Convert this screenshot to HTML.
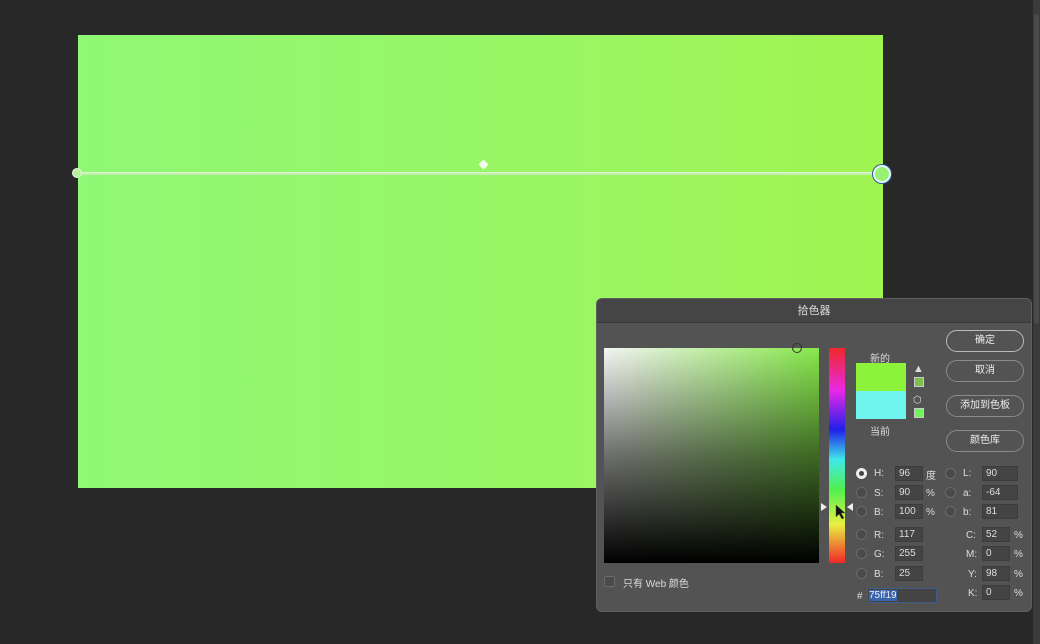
<!DOCTYPE html>
<html><head><meta charset="utf-8"><style>
*{margin:0;padding:0;box-sizing:border-box}
body{width:1040px;height:644px;background:#282828;position:relative;overflow:hidden;font-family:"Liberation Sans","Noto Sans CJK SC",sans-serif;color:#ddd;font-size:10px}
.a{position:absolute}
.rad{position:absolute;width:11px;height:11px;border-radius:50%;border:1px solid #6a6a6a;background:#4a4a4a}
.lab{position:absolute;font-size:10px;color:#ddd}
.fld{position:absolute;height:15px;background:#444;border:1px solid #3c3c3c;color:#ddd;font-size:10px;padding-left:3px;line-height:13px}
.btn{position:absolute;left:946px;width:78px;height:22px;border:1px solid #8a8a8a;border-radius:11px;text-align:center;line-height:20px;font-size:10px;color:#eee}
</style></head><body>
<div class="a" style="left:1033px;top:0;width:7px;height:644px;background:#3a3a3a"></div>
<div class="a" style="left:1034px;top:14px;width:5px;height:310px;background:#4a4a4a;border-radius:3px"></div>
<div class="a" style="left:78px;top:35px;width:805px;height:453px;background:linear-gradient(90deg,#8ff874,#99f663 60%,#a0f450)"></div>
<div class="a" style="left:78px;top:172px;width:804px;height:3px;background:#c6eeb3;border-top:1px solid #d8f5cb"></div>
<div class="a" style="left:72px;top:168px;width:10px;height:10px;border-radius:50%;background:#b8f0a0;border:1px solid #e8f8e0"></div>
<div class="a" style="left:480px;top:161px;width:7px;height:7px;background:#f2fbee;transform:rotate(45deg)"></div>
<div class="a" style="left:873px;top:165px;width:18px;height:18px;border-radius:50%;background:#96f270;border:2px solid #e8f4ff;box-shadow:0 0 0 1px #2a5a90"></div>

<div class="a" style="left:596px;top:298px;width:436px;height:314px;background:#535353;border-radius:6px;overflow:hidden;border:1px solid #5e5e5e">
 <div style="height:24px;background:#454545;border-bottom:1px solid #3a3a3a;text-align:center;line-height:24px;font-size:11px;color:#ddd">拾色器</div>
</div>
<div class="a" style="left:604px;top:348px;width:215px;height:215px;background:linear-gradient(to bottom,rgba(0,0,0,0),rgba(0,0,0,.55) 50%,#000),linear-gradient(to right,#f4f4f4,#86e84a)"></div>
<div class="a" style="left:792px;top:343px;width:10px;height:10px;border-radius:50%;border:1px solid #333"></div>
<div class="a" style="left:829px;top:348px;width:16px;height:215px;background:linear-gradient(to bottom,#f02828,#e828e8 20%,#2020e8 38%,#40e8e8 52%,#50f050 66%,#e8f040 82%,#f02828)"></div>
<div class="a" style="left:821px;top:503px;width:0;height:0;border-left:6px solid #eee;border-top:4px solid transparent;border-bottom:4px solid transparent"></div>
<div class="a" style="left:847px;top:503px;width:0;height:0;border-right:6px solid #eee;border-top:4px solid transparent;border-bottom:4px solid transparent"></div>
<svg class="a" style="left:834px;top:504px" width="12" height="16" viewBox="0 0 12 16"><path d="M2 1 L2 13 L5 10 L8 15 L10 14 L7 9 L11 9 Z" fill="#111" stroke="#555" stroke-width=".5"/></svg>
<div class="lab" style="left:870px;top:350px">新的</div>
<div class="a" style="left:856px;top:363px;width:50px;height:28px;background:#8cf23a"></div>
<div class="a" style="left:856px;top:391px;width:50px;height:28px;background:#70f4ee"></div>
<div class="lab" style="left:870px;top:423px">当前</div>
<div class="lab" style="left:913px;top:363px;font-size:11px">▲</div>
<div class="a" style="left:914px;top:377px;width:10px;height:10px;background:#7cc24a;border:1px solid #ccc"></div>
<div class="lab" style="left:913px;top:395px">⬡</div>
<div class="a" style="left:914px;top:408px;width:10px;height:10px;background:#74f060;border:1px solid #ccc"></div>
<div class="btn" style="top:330px;border-color:#bbb">确定</div>
<div class="btn" style="top:360px">取消</div>
<div class="btn" style="top:395px">添加到色板</div>
<div class="btn" style="top:430px">颜色库</div>

<div class="rad" style="left:856px;top:468px;background:#eee;border:3px solid #eee"></div>
<div class="a" style="left:859px;top:471px;width:5px;height:5px;border-radius:50%;background:#444"></div>
<div class="lab" style="left:874px;top:468px">H:</div><div class="fld" style="left:895px;top:466px;width:28px">96</div><div class="lab" style="left:926px;top:467px">度</div>
<div class="rad" style="left:856px;top:487px"></div><div class="lab" style="left:874px;top:488px">S:</div><div class="fld" style="left:895px;top:485px;width:28px">90</div><div class="lab" style="left:926px;top:488px">%</div>
<div class="rad" style="left:856px;top:506px"></div><div class="lab" style="left:874px;top:507px">B:</div><div class="fld" style="left:895px;top:504px;width:28px">100</div><div class="lab" style="left:926px;top:507px">%</div>
<div class="rad" style="left:856px;top:529px"></div><div class="lab" style="left:874px;top:530px">R:</div><div class="fld" style="left:895px;top:527px;width:28px">117</div>
<div class="rad" style="left:856px;top:548px"></div><div class="lab" style="left:874px;top:549px">G:</div><div class="fld" style="left:895px;top:546px;width:28px">255</div>
<div class="rad" style="left:856px;top:568px"></div><div class="lab" style="left:874px;top:569px">B:</div><div class="fld" style="left:895px;top:566px;width:28px">25</div>
<div class="rad" style="left:945px;top:468px"></div><div class="lab" style="left:963px;top:468px">L:</div><div class="fld" style="left:982px;top:466px;width:36px">90</div>
<div class="rad" style="left:945px;top:487px"></div><div class="lab" style="left:963px;top:488px">a:</div><div class="fld" style="left:982px;top:485px;width:36px">-64</div>
<div class="rad" style="left:945px;top:506px"></div><div class="lab" style="left:963px;top:507px">b:</div><div class="fld" style="left:982px;top:504px;width:36px">81</div>
<div class="lab" style="left:966px;top:530px">C:</div><div class="fld" style="left:982px;top:527px;width:28px">52</div><div class="lab" style="left:1014px;top:530px">%</div>
<div class="lab" style="left:966px;top:549px">M:</div><div class="fld" style="left:982px;top:546px;width:28px">0</div><div class="lab" style="left:1014px;top:549px">%</div>
<div class="lab" style="left:968px;top:569px">Y:</div><div class="fld" style="left:982px;top:566px;width:28px">98</div><div class="lab" style="left:1014px;top:569px">%</div>
<div class="lab" style="left:968px;top:588px">K:</div><div class="fld" style="left:982px;top:585px;width:28px">0</div><div class="lab" style="left:1014px;top:588px">%</div>
<div class="lab" style="left:857px;top:591px">#</div>
<div class="fld" style="left:867px;top:588px;width:70px;border-color:#3d5d8a;padding-left:1px"><span style="background:#3a64a8;color:#eef">75ff19</span></div>
<div class="a" style="left:604px;top:576px;width:11px;height:11px;border:1px solid #6a6a6a;border-radius:2px;background:#4a4a4a"></div>
<div class="lab" style="left:623px;top:575px">只有 Web 颜色</div>
</body></html>
